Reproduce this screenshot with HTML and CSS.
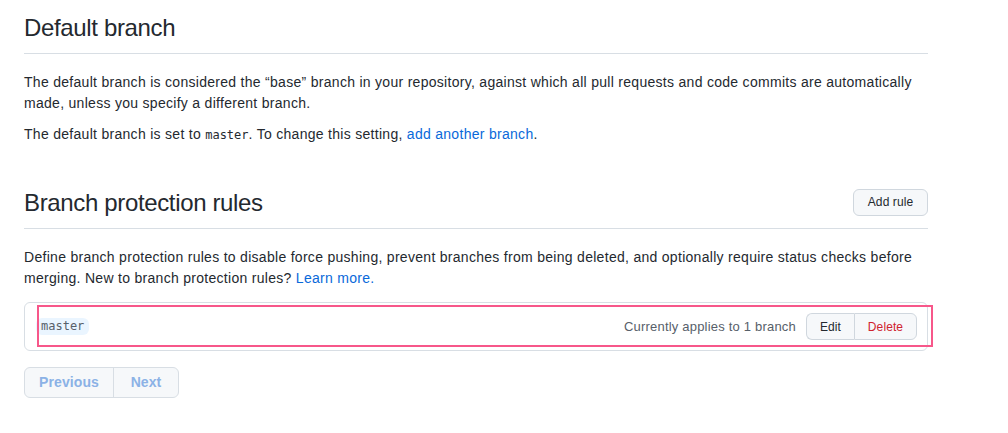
FILE: index.html
```html
<!DOCTYPE html>
<html lang="en">
<head>
<meta charset="utf-8">
<title>Branches</title>
<link rel="stylesheet" href="styles.css">
</head>
<body>
<main class="settings">
  <section class="section">
    <div class="subhead">
      <h2 class="subhead-heading">Default branch</h2>
    </div>
    <p class="text">The default branch is considered the “base” branch in your repository, against which all pull requests and code commits are automatically made, unless you specify a different branch.</p>
    <p class="text">The default branch is set to <code class="code">master</code>. To change this setting, <a class="link" href="#">add another branch</a>.</p>
  </section>

  <section class="section section-spacious">
    <div class="subhead">
      <h2 class="subhead-heading">Branch protection rules</h2>
      <button class="btn btn-sm" type="button">Add rule</button>
    </div>
    <p class="text">Define branch protection rules to disable force pushing, prevent branches from being deleted, and optionally require status checks before merging. New to branch protection rules? <a class="link" href="#">Learn more.</a></p>

    <div class="box">
      <div class="box-row">
        <span class="branch-name">master</span>
        <div class="row-actions">
          <span class="applies">Currently applies to 1 branch</span>
          <div class="btn-group">
            <button class="btn btn-sm group-btn" type="button">Edit</button>
            <button class="btn btn-sm group-btn danger" type="button">Delete</button>
          </div>
        </div>
      </div>
      <div class="highlight"></div>
    </div>

    <nav class="pagination">
      <span class="page-btn">Previous</span>
      <span class="page-btn">Next</span>
    </nav>
  </section>
</main>
</body>
</html>
```

FILE: styles.css
```css
* {
  box-sizing: border-box;
}

body {
  margin: 0;
  background: #ffffff;
  color: #24292f;
  font-family: "Liberation Sans", Arial, sans-serif;
  font-size: 14px;
  line-height: 1.5;
  letter-spacing: 0.29px;
}

.settings {
  width: 904px;
  margin-left: 24px;
  padding-top: 10px;
}

.subhead {
  display: flex;
  align-items: center;
  justify-content: space-between;
  padding-bottom: 7px;
  margin-bottom: 18px;
  border-bottom: 1px solid #d8dee4;
}

.subhead-heading {
  margin: 0;
  font-size: 24px;
  font-weight: 400;
  line-height: 36px;
  letter-spacing: -0.35px;
}

.section-spacious {
  margin-top: 40px;
}

.text {
  margin: 0 0 10px;
}

.code {
  font-family: "DejaVu Sans Mono", "Liberation Mono", monospace;
  font-size: 12px;
  letter-spacing: 0;
}

.link {
  color: #0969da;
  text-decoration: none;
}

.btn {
  display: inline-flex;
  align-items: center;
  justify-content: center;
  height: 27px;
  padding: 0 12px;
  font-family: inherit;
  font-size: 12px;
  font-weight: 500;
  letter-spacing: 0.1px;
  color: #24292f;
  background: #f6f8fa;
  border: 1px solid #d0d7de;
  border-radius: 6px;
  cursor: pointer;
}

.subhead .btn {
  width: 75px;
  margin-top: -2px;
}

.box {
  position: relative;
  margin-top: 13px;
  border: 1px solid #d8dee4;
  border-radius: 6px;
}

.box-row {
  display: flex;
  align-items: center;
  justify-content: space-between;
  padding: 10px 10px 10px 11px;
}

.branch-name {
  padding: 0 5px;
  font-family: "DejaVu Sans Mono", "Liberation Mono", monospace;
  font-size: 12px;
  line-height: 17px;
  letter-spacing: 0;
  color: #57606a;
  background: #eaf5ff;
  border-radius: 6px;
}

.row-actions {
  display: flex;
  align-items: center;
  gap: 10px;
}

.applies {
  color: #57606a;
  font-size: 13px;
  letter-spacing: 0.2px;
}

.btn-group {
  display: flex;
}

.group-btn {
  border-radius: 0;
}

.group-btn:first-child {
  width: 48px;
  border-radius: 6px 0 0 6px;
  border-right-width: 0;
}

.group-btn:last-child {
  width: 63px;
  border-radius: 0 6px 6px 0;
}

.danger {
  color: #cf222e;
}

.highlight {
  position: absolute;
  left: 12px;
  top: 2px;
  width: 896px;
  height: 42px;
  border: 2px solid #f7578a;
  pointer-events: none;
}

.pagination {
  display: inline-flex;
  margin-top: 16px;
  border: 1px solid #d8dee4;
  border-radius: 6px;
  background: #f6f8fa;
  overflow: hidden;
}

.page-btn {
  display: inline-flex;
  align-items: center;
  justify-content: center;
  height: 29px;
  font-size: 14px;
  font-weight: 600;
  letter-spacing: 0.1px;
  color: #8bb2e6;
}

.page-btn:first-child {
  width: 89px;
  border-right: 1px solid #d8dee4;
}

.page-btn:last-child {
  width: 64px;
}
```
